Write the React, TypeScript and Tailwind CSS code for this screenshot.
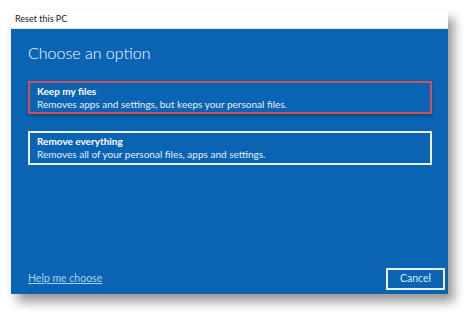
export default function App() {
  const font = { fontFamily: 'Lato, "Open Sans", sans-serif' };
  return (
    <div className="w-[474px] h-[320px] bg-white overflow-hidden" style={font}>
      <div className="ml-[11px] mt-[10px] w-[437px] flex flex-col shadow-[6px_8px_10px_rgba(0,0,0,0.4)]">
        <div className="h-[19px] bg-white flex items-center pl-[4px] text-[9px] text-[#222] border-b border-[#e4e4e4]">
          Reset this PC
        </div>
        <div className="h-[265px] bg-[#0a63b3] flex flex-col px-[17px] pb-[4px]">
          <div className="pt-[12px] text-[16px] font-light text-white leading-[24px]">
            Choose an option
          </div>
          <div className="mt-[16px] flex flex-col gap-[17px] w-[404px]">
            <div className="h-[33px] border-2 border-[#d0505c] flex flex-col justify-center pl-[7px] shadow-[0_2px_3px_rgba(0,0,0,0.3)]">
              <div className="text-[10px] font-bold text-white leading-[13px]">Keep my files</div>
              <div className="text-[10px] text-[#e6f0fa] leading-[13px]">
                Removes apps and settings, but keeps your personal files.
              </div>
            </div>
            <div className="h-[34px] border-2 border-[#e8f2fb] flex flex-col justify-center pl-[7px]">
              <div className="text-[10px] font-bold text-white leading-[13px]">Remove everything</div>
              <div className="text-[10px] text-[#e6f0fa] leading-[13px]">
                Removes all of your personal files, apps and settings.
              </div>
            </div>
          </div>
          <div className="mt-auto flex items-center justify-between mr-[-14px]">
            <span className="text-[10.5px] text-[#a9d2f3] underline">Help me choose</span>
            <div className="w-[59px] h-[22px] border-2 border-[#e8f2fb] flex items-center justify-center text-[10.5px] text-[#dcebf8]">
              Cancel
            </div>
          </div>
        </div>
      </div>
    </div>
  );
}
